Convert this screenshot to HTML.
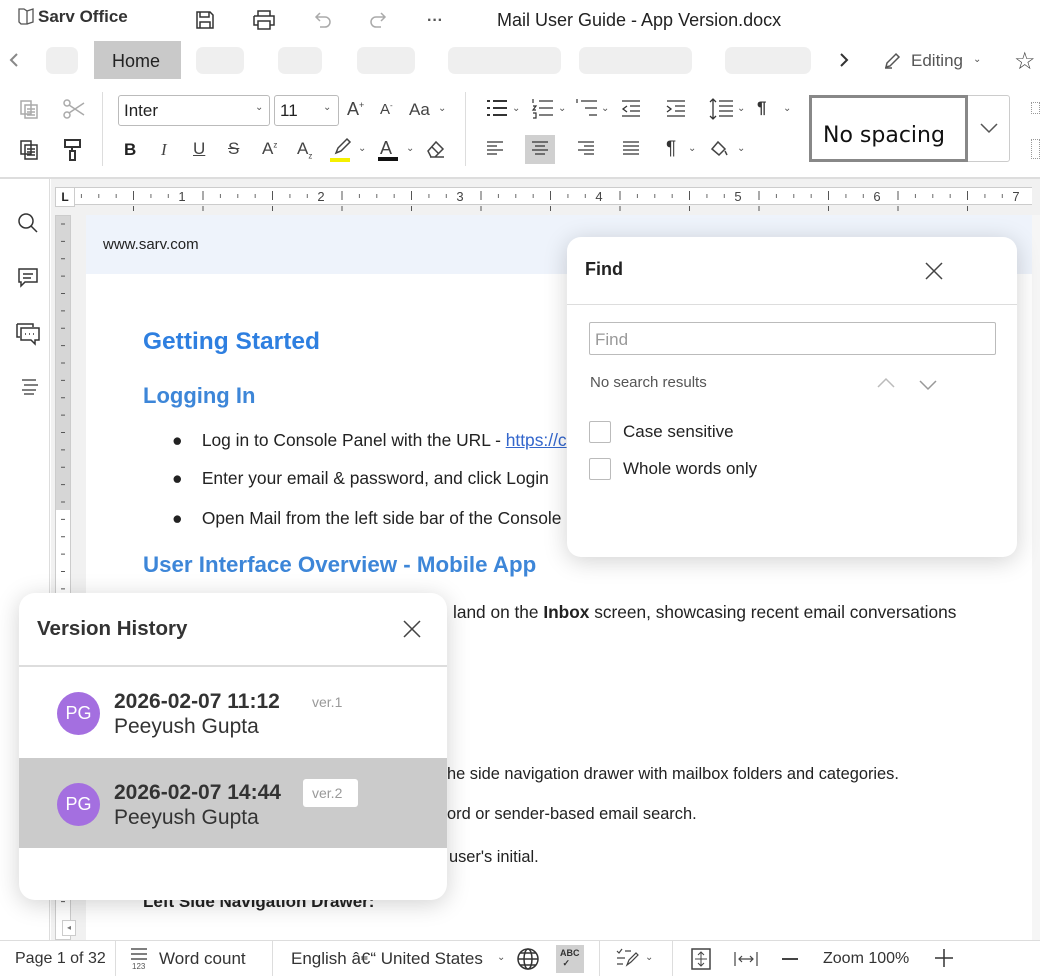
<!DOCTYPE html>
<html><head><meta charset="utf-8">
<style>
*{box-sizing:border-box;margin:0;padding:0}
body{width:1040px;height:976px;overflow:hidden;background:#fff;font-family:"Liberation Sans",sans-serif;color:#222;position:relative}
.a{position:absolute}
.ic{position:absolute;fill:none;stroke:#444;stroke-width:1.5}
.pill{position:absolute;top:47px;height:27px;background:#efefef;border-radius:7px}
.t{position:absolute;font-size:16px;color:#222;white-space:nowrap}
.dd{position:absolute;font-size:10px;color:#555}
</style></head><body>

<!-- Top bar -->
<svg class="ic" style="left:17px;top:7px" width="20" height="18" viewBox="0 0 20 18"><path d="M2 2h5l3 2v13H4l-2-2z M10 4l6-2v13l-6 2" stroke="#555" stroke-width="1.3"/></svg>
<div class="t" style="left:38px;top:7px;font-weight:bold;font-size:17px;color:#333">Sarv Office</div>
<svg class="ic" style="left:195px;top:10px" width="20" height="20" viewBox="0 0 20 20"><path d="M2 2h13l3 3v13H2z M5 2v5h9V2 M5 18v-6h10v6" stroke="#333"/></svg>
<svg class="ic" style="left:252px;top:10px" width="24" height="20" viewBox="0 0 24 20"><path d="M6 6V1h12v5 M2 6h20v9h-4 M6 15H2V6 M6 11h12v8H6z" stroke="#333"/></svg>
<svg class="ic" style="left:312px;top:10px" width="20" height="20" viewBox="0 0 20 20"><path d="M4 7h9a5 5 0 010 10H8 M8 3L4 7l4 4" stroke="#aaa"/></svg>
<svg class="ic" style="left:369px;top:10px" width="20" height="20" viewBox="0 0 20 20"><path d="M16 7H7a5 5 0 000 10h5 M12 3l4 4-4 4" stroke="#aaa"/></svg>
<div class="t" style="left:427px;top:12px;font-weight:bold;color:#555">···</div>
<div class="t" style="left:497px;top:10px;font-size:18px;color:#222">Mail User Guide - App Version.docx</div>

<!-- Tabs -->
<svg class="ic" style="left:8px;top:52px" width="12" height="16" viewBox="0 0 12 16"><path d="M9 2L3 8l6 6" stroke="#888" stroke-width="2"/></svg>
<div class="pill" style="left:46px;width:32px"></div>
<div class="a" style="left:94px;top:41px;width:87px;height:38px;background:#c9c9c9"></div>
<div class="t" style="left:112px;top:51px;font-size:18px">Home</div>
<div class="pill" style="left:196px;width:48px"></div>
<div class="pill" style="left:278px;width:44px"></div>
<div class="pill" style="left:357px;width:58px"></div>
<div class="pill" style="left:448px;width:113px"></div>
<div class="pill" style="left:579px;width:113px"></div>
<div class="pill" style="left:725px;width:86px"></div>
<svg class="ic" style="left:838px;top:52px" width="12" height="16" viewBox="0 0 12 16"><path d="M3 2l6 6-6 6" stroke="#333" stroke-width="2"/></svg>
<svg class="ic" style="left:883px;top:50px" width="20" height="20" viewBox="0 0 20 20"><path d="M3 17l1-4 9-9 3 3-9 9z M2 18h7" stroke="#555"/></svg>
<div class="t" style="left:911px;top:51px;font-size:17px;color:#555">Editing</div>
<div class="dd" style="left:973px;top:54px">⌄</div>
<div class="t" style="left:1014px;top:47px;font-size:24px;color:#444">☆</div>

<!-- Toolbar -->
<div class="a" style="left:0;top:177px;width:1040px;height:2px;background:#ddd"></div>
<div class="a" style="left:102px;top:92px;width:1px;height:74px;background:#ddd"></div>
<div class="a" style="left:465px;top:92px;width:1px;height:74px;background:#ddd"></div>
<svg class="ic" style="left:18px;top:98px" width="22" height="22" viewBox="0 0 22 22"><path d="M3 3h10v13H3z M7 7h12v13H7z M9 11h8 M9 14h8 M9 17h8" stroke="#aaa"/></svg>
<svg class="ic" style="left:62px;top:98px" width="24" height="22" viewBox="0 0 24 22"><circle cx="5" cy="5" r="3" stroke="#aaa"/><circle cx="5" cy="17" r="3" stroke="#aaa"/><path d="M7 7l15 10 M7 15L22 5" stroke="#aaa"/></svg>
<svg class="ic" style="left:18px;top:138px" width="22" height="24" viewBox="0 0 22 24"><path d="M3 3h10v13H3z M7 7h12v14H7z M9 11h8 M9 14h8 M9 17h8" stroke="#333"/></svg>
<svg class="ic" style="left:63px;top:138px" width="20" height="24" viewBox="0 0 20 24"><path d="M2 2h15v7H2z M9 9v4 M7 13h5v9H7z" stroke="#333" stroke-width="2"/></svg>
<div class="a" style="left:118px;top:95px;width:152px;height:31px;border:1px solid #bbb;border-radius:3px"></div>
<div class="t" style="left:124px;top:101px;font-size:17px">Inter</div>
<div class="dd" style="left:255px;top:102px">⌄</div>
<div class="a" style="left:274px;top:95px;width:65px;height:31px;border:1px solid #bbb;border-radius:3px"></div>
<div class="t" style="left:280px;top:101px;font-size:17px">11</div>
<div class="dd" style="left:323px;top:102px">⌄</div>
<div class="t" style="left:347px;top:99px;font-size:18px;color:#444">A<sup style="font-size:9px">+</sup></div>
<div class="t" style="left:380px;top:101px;font-size:15px;color:#444">A<sup style="font-size:8px">-</sup></div>
<div class="t" style="left:409px;top:100px;font-size:17px;color:#444">Aa</div><div class="dd" style="left:438px;top:103px">⌄</div>
<div class="t" style="left:124px;top:140px;font-weight:bold;font-size:17px">B</div>
<div class="t" style="left:161px;top:140px;font-style:italic;font-size:17px;font-family:'Liberation Serif',serif;color:#444">I</div>
<div class="t" style="left:193px;top:139px;text-decoration:underline;font-size:17px;color:#444">U</div>
<div class="t" style="left:228px;top:139px;text-decoration:line-through;font-size:17px;color:#444">S</div>
<div class="t" style="left:262px;top:139px;font-size:17px;color:#444">A<sup style="font-size:8px">z</sup></div>
<div class="t" style="left:297px;top:139px;font-size:17px;color:#444">A<sub style="font-size:8px">z</sub></div>
<svg class="ic" style="left:330px;top:137px" width="24" height="26" viewBox="0 0 24 26"><path d="M6 16l2-5 9-9 3 3-9 9z" stroke="#444"/><rect x="0" y="21" width="20" height="4" fill="#f5f000" stroke="none"/></svg>
<div class="dd" style="left:358px;top:143px">⌄</div>
<div class="t" style="left:380px;top:138px;font-size:18px;color:#444">A</div>
<div class="a" style="left:378px;top:157px;width:20px;height:4px;background:#111"></div>
<div class="dd" style="left:406px;top:143px">⌄</div>
<svg class="ic" style="left:425px;top:139px" width="22" height="20" viewBox="0 0 22 20"><path d="M3 12l8-9 7 7-8 8H6z M7 8l7 7 M5 18h14" stroke="#444"/></svg>

<svg class="ic" style="left:485px;top:98px" width="26" height="22" viewBox="0 0 26 22"><path d="M2 3h3 M8 3h14 M2 10h3 M8 10h14 M2 17h3 M8 17h14" stroke="#333" stroke-width="2"/></svg><div class="dd" style="left:512px;top:103px">⌄</div>
<svg class="ic" style="left:531px;top:98px" width="26" height="22" viewBox="0 0 26 22"><path d="M8 3h14 M8 10h14 M8 17h14 M2 1v4 M2 8h3l-3 4h3 M2 15h3v5H2" stroke="#333" stroke-width="1.2"/></svg><div class="dd" style="left:558px;top:103px">⌄</div>
<svg class="ic" style="left:575px;top:98px" width="26" height="22" viewBox="0 0 26 22"><path d="M6 3h16 M10 10h12 M14 17h8 M2 1v4" stroke="#333" stroke-width="1.2"/></svg><div class="dd" style="left:601px;top:103px">⌄</div>
<svg class="ic" style="left:620px;top:98px" width="22" height="22" viewBox="0 0 22 22"><path d="M2 3h18 M10 8h10 M10 13h10 M2 18h18 M7 8l-4 3 4 3" stroke="#333" stroke-width="1.3"/></svg>
<svg class="ic" style="left:665px;top:98px" width="22" height="22" viewBox="0 0 22 22"><path d="M2 3h18 M10 8h10 M10 13h10 M2 18h18 M2 8l4 3-4 3" stroke="#333" stroke-width="1.3"/></svg>
<svg class="ic" style="left:709px;top:98px" width="26" height="22" viewBox="0 0 26 22"><path d="M10 3h14 M10 8h14 M10 13h14 M10 18h14 M4 1v20 M1 4l3-3 3 3 M1 18l3 3 3-3" stroke="#333" stroke-width="1.3"/></svg><div class="dd" style="left:737px;top:103px">⌄</div>
<div class="t" style="left:757px;top:98px;font-size:17px;font-weight:bold;color:#333">¶</div><div class="dd" style="left:783px;top:103px">⌄</div>
<svg class="ic" style="left:485px;top:139px" width="20" height="20" viewBox="0 0 20 20"><path d="M2 3h16 M2 7h10 M2 11h16 M2 15h10" stroke="#333" stroke-width="1.3"/></svg>
<div class="a" style="left:525px;top:135px;width:30px;height:29px;background:#d0d0d0"></div>
<svg class="ic" style="left:530px;top:139px" width="20" height="20" viewBox="0 0 20 20"><path d="M2 3h16 M5 7h10 M2 11h16 M5 15h10" stroke="#333" stroke-width="1.3"/></svg>
<svg class="ic" style="left:576px;top:139px" width="20" height="20" viewBox="0 0 20 20"><path d="M2 3h16 M8 7h10 M2 11h16 M8 15h10" stroke="#333" stroke-width="1.3"/></svg>
<svg class="ic" style="left:621px;top:139px" width="20" height="20" viewBox="0 0 20 20"><path d="M2 3h16 M2 7h16 M2 11h16 M2 15h16" stroke="#333" stroke-width="1.3"/></svg>
<div class="t" style="left:666px;top:138px;font-size:19px;color:#333">¶</div><div class="dd" style="left:688px;top:143px">⌄</div>
<svg class="ic" style="left:709px;top:139px" width="22" height="20" viewBox="0 0 22 20"><path d="M3 10l6-7 7 7-6 6z M16 12l2 4" stroke="#444"/></svg><div class="dd" style="left:737px;top:143px">⌄</div>

<div class="a" style="left:809px;top:95px;width:201px;height:67px;border:1px solid #ccc;border-radius:3px"></div>
<div class="a" style="left:809px;top:95px;width:159px;height:67px;border:3px solid #888"></div>
<div class="t" style="left:823px;top:123px;font-size:22px;font-family:'DejaVu Sans',sans-serif;color:#111">No spacing</div>
<svg class="ic" style="left:979px;top:122px" width="20" height="12" viewBox="0 0 20 12"><path d="M2 2l8 8 8-8" stroke="#555"/></svg>
<div class="a" style="left:1031px;top:102px;width:9px;height:12px;border:1px dotted #999"></div>
<div class="a" style="left:1031px;top:139px;width:9px;height:20px;border:1px dotted #999"></div>

<!-- left sidebar -->
<div class="a" style="left:0;top:179px;width:50px;height:761px;background:#fff;border-right:1px solid #ddd"></div>
<svg class="ic" style="left:16px;top:211px" width="24" height="24" viewBox="0 0 24 24"><circle cx="10" cy="10" r="7" stroke="#333"/><path d="M15 15l6 6" stroke="#333"/></svg>
<svg class="ic" style="left:17px;top:267px" width="22" height="22" viewBox="0 0 22 22"><path d="M2 2h18v13H8l-4 4v-4H2z M6 7h10 M6 11h8" stroke="#333"/></svg>
<svg class="ic" style="left:15px;top:322px" width="26" height="24" viewBox="0 0 26 24"><path d="M2 2h16v3 M2 2v13h3 M6 6h18v12h-4v4l-4-4H6z M10 12h1 M14 12h1 M18 12h1" stroke="#333"/></svg>
<svg class="ic" style="left:18px;top:377px" width="22" height="20" viewBox="0 0 22 20"><path d="M4 3h14 M6 8h14 M4 13h14 M6 17h10" stroke="#333" stroke-width="1.3"/></svg>

<!-- document area -->
<div class="a" style="left:51px;top:179px;width:989px;height:761px;background:#f1f1f1"></div>
<div class="a" style="left:75px;top:187px;width:957px;height:18px;background:#fff;border-top:1px solid #ccc;border-bottom:1px solid #ccc"></div>
<div class="a" style="left:55px;top:187px;width:20px;height:20px;background:#fff;border:1px solid #ccc;font-weight:bold;font-size:12px;text-align:center;line-height:18px">L</div>
<svg class="a" style="left:75px;top:187px" width="957" height="30">
<defs><pattern id="tk" x="-10.5" y="0" width="17.375" height="30" patternUnits="userSpaceOnUse"><line x1="17" y1="7" x2="17" y2="11" stroke="#555" stroke-width="1"/></pattern>
<pattern id="tk2" x="-10.5" y="0" width="69.5" height="30" patternUnits="userSpaceOnUse"><line x1="69" y1="4" x2="69" y2="13" stroke="#555" stroke-width="1"/><line x1="69" y1="19" x2="69" y2="24" stroke="#555"/></pattern></defs>
<rect x="0" y="0" width="957" height="18" fill="url(#tk)"/>
<rect x="0" y="0" width="957" height="30" fill="url(#tk2)"/>
<g font-size="13" fill="#444" text-anchor="middle" font-family="Liberation Sans">
<rect x="100" y="2" width="14" height="14" fill="#fff"/><text x="107" y="14">1</text>
<rect x="239" y="2" width="14" height="14" fill="#fff"/><text x="246" y="14">2</text>
<rect x="378" y="2" width="14" height="14" fill="#fff"/><text x="385" y="14">3</text>
<rect x="517" y="2" width="14" height="14" fill="#fff"/><text x="524" y="14">4</text>
<rect x="656" y="2" width="14" height="14" fill="#fff"/><text x="663" y="14">5</text>
<rect x="795" y="2" width="14" height="14" fill="#fff"/><text x="802" y="14">6</text>
<rect x="934" y="2" width="14" height="14" fill="#fff"/><text x="941" y="14">7</text></g>
</svg>
<div class="a" style="left:55px;top:215px;width:16px;height:725px;background:#fff;border:1px solid #ccc"></div>
<div class="a" style="left:56px;top:216px;width:14px;height:285px;background:#d6d6d6"></div>
<div class="a" style="left:56px;top:495px;width:14px;height:15px;background:#d6d6d6"></div>
<svg class="a" style="left:56px;top:216px" width="14" height="720"><defs><pattern id="vt" x="0" y="7" width="14" height="17.375" patternUnits="userSpaceOnUse"><line x1="5" y1="1" x2="9" y2="1" stroke="#555"/></pattern></defs><rect width="14" height="700" fill="url(#vt)"/></svg>
<div class="a" style="left:62px;top:920px;width:14px;height:16px;background:#fff;border:1px solid #ccc;font-size:8px;color:#777;text-align:center;line-height:14px">◂</div>

<div class="a" style="left:86px;top:215px;width:946px;height:725px;background:#fff"></div>
<div class="a" style="left:86px;top:215px;width:946px;height:59px;background:#eef3fb"></div>
<div class="a" style="left:1032px;top:215px;width:8px;height:725px;background:#f6f6f6"></div>
<div class="t" style="left:103px;top:236px;font-size:15px">www.sarv.com</div>
<div class="t" style="left:143px;top:328px;font-size:24.5px;font-weight:bold;color:#2e7fe0">Getting Started</div>
<div class="t" style="left:143px;top:383px;font-size:22px;font-weight:bold;color:#3d86d8">Logging In</div>
<div class="t" style="left:172px;top:430px;font-size:17.4px">●&nbsp;&nbsp;&nbsp;&nbsp;Log in to Console Panel with the URL - <span style="color:#3366cc;text-decoration:underline">https://c</span></div>
<div class="t" style="left:172px;top:468px;font-size:17.4px">●&nbsp;&nbsp;&nbsp;&nbsp;Enter your email &amp; password, and click Login</div>
<div class="t" style="left:172px;top:508px;font-size:17.4px">●&nbsp;&nbsp;&nbsp;&nbsp;Open Mail from the left side bar of the Console</div>
<div class="t" style="left:143px;top:552px;font-size:22.3px;font-weight:bold;color:#3d86d8">User Interface Overview - Mobile App</div>
<div class="t" style="left:453px;top:602px;font-size:17.3px">land on the <b>Inbox</b> screen, showcasing recent email conversations</div>
<div class="t" style="left:447px;top:765px;font-size:16.4px">he side navigation drawer with mailbox folders and categories.</div>
<div class="t" style="left:447px;top:805px;font-size:16.4px">ord or sender-based email search.</div>
<div class="t" style="left:449px;top:848px;font-size:16.4px">user's initial.</div>
<div class="t" style="left:143px;top:892px;font-size:17px;font-weight:bold">Left Side Navigation Drawer:</div>

<!-- Find panel -->
<div class="a" style="left:567px;top:237px;width:450px;height:320px;background:#fff;border-radius:14px;box-shadow:0 4px 24px rgba(0,0,0,.18)"></div>
<div class="t" style="left:585px;top:259px;font-size:18px;font-weight:bold">Find</div>
<svg class="ic" style="left:924px;top:261px" width="20" height="20" viewBox="0 0 20 20"><path d="M2 2l16 16 M18 2L2 18" stroke="#444"/></svg>
<div class="a" style="left:567px;top:304px;width:450px;height:1px;background:#ddd"></div>
<div class="a" style="left:589px;top:322px;width:407px;height:33px;border:1px solid #bbb;border-radius:2px"></div>
<div class="t" style="left:595px;top:330px;font-size:17px;color:#999">Find</div>
<div class="t" style="left:590px;top:374px;font-size:15px;color:#555">No search results</div>
<svg class="ic" style="left:876px;top:377px" width="20" height="12" viewBox="0 0 20 12"><path d="M2 10l8-8 8 8" stroke="#bbb"/></svg>
<svg class="ic" style="left:918px;top:379px" width="20" height="12" viewBox="0 0 20 12"><path d="M2 2l8 8 8-8" stroke="#999"/></svg>
<div class="a" style="left:589px;top:421px;width:22px;height:22px;border:1px solid #bbb;border-radius:2px"></div>
<div class="t" style="left:623px;top:422px;font-size:17px">Case sensitive</div>
<div class="a" style="left:589px;top:458px;width:22px;height:22px;border:1px solid #bbb;border-radius:2px"></div>
<div class="t" style="left:623px;top:459px;font-size:17px">Whole words only</div>

<!-- Version history -->
<div class="a" style="left:19px;top:593px;width:428px;height:307px;background:#fff;border-radius:16px;box-shadow:0 4px 24px rgba(0,0,0,.18);overflow:hidden">
 <div class="a" style="left:0;top:72px;width:428px;height:2px;background:#ddd"></div>
 <div class="a" style="left:0;top:165px;width:428px;height:90px;background:#cbcbcb"></div>
</div>
<div class="t" style="left:37px;top:617px;font-size:20.5px;font-weight:bold;color:#333">Version History</div>
<svg class="ic" style="left:402px;top:619px" width="20" height="20" viewBox="0 0 20 20"><path d="M2 2l16 16 M18 2L2 18" stroke="#444"/></svg>
<div class="a" style="left:57px;top:692px;width:43px;height:43px;border-radius:50%;background:#a46fe0;color:#fff;font-size:18px;text-align:center;line-height:43px">PG</div>
<div class="t" style="left:114px;top:690px;font-size:21px;font-weight:bold;color:#333">2026-02-07 11:12</div>
<div class="t" style="left:312px;top:694px;font-size:14px;color:#999">ver.1</div>
<div class="t" style="left:114px;top:715px;font-size:21px;color:#333">Peeyush Gupta</div>
<div class="a" style="left:57px;top:783px;width:43px;height:43px;border-radius:50%;background:#a46fe0;color:#fff;font-size:18px;text-align:center;line-height:43px">PG</div>
<div class="t" style="left:114px;top:781px;font-size:21px;font-weight:bold;color:#333">2026-02-07 14:44</div>
<div class="a" style="left:303px;top:779px;width:55px;height:28px;background:#fff;border-radius:3px"></div>
<div class="t" style="left:312px;top:785px;font-size:14px;color:#999">ver.2</div>
<div class="t" style="left:114px;top:806px;font-size:21px;color:#333">Peeyush Gupta</div>

<!-- status bar -->
<div class="a" style="left:0;top:940px;width:1040px;height:36px;background:#fff;border-top:1px solid #ddd"></div>
<div class="t" style="left:15px;top:950px;font-size:16px;color:#333">Page 1 of 32</div>
<div class="a" style="left:115px;top:941px;width:1px;height:35px;background:#ddd"></div>
<svg class="ic" style="left:129px;top:946px" width="20" height="24" viewBox="0 0 20 24"><path d="M2 3h16 M2 8h16 M2 13h16" stroke="#555"/><text x="3" y="23" font-size="8" fill="#555" stroke="none" font-family="Liberation Sans">123</text></svg>
<div class="t" style="left:159px;top:949px;font-size:17px;color:#333">Word count</div>
<div class="a" style="left:272px;top:941px;width:1px;height:35px;background:#ddd"></div>
<div class="t" style="left:291px;top:949px;font-size:17px;color:#333">English â€“ United States</div>
<div class="dd" style="left:497px;top:952px">⌄</div>
<svg class="ic" style="left:516px;top:947px" width="24" height="24" viewBox="0 0 24 24"><circle cx="12" cy="12" r="10" stroke="#333"/><ellipse cx="12" cy="12" rx="4" ry="10" stroke="#333"/><path d="M2 12h20 M4 6h16 M4 18h16" stroke="#333"/></svg>
<div class="a" style="left:556px;top:945px;width:28px;height:28px;background:#d0d0d0"></div>
<div class="t" style="left:560px;top:948px;font-size:9px;font-weight:bold;color:#333">ABC<br>&nbsp;✓</div>
<div class="a" style="left:599px;top:941px;width:1px;height:35px;background:#ddd"></div>
<svg class="ic" style="left:615px;top:947px" width="26" height="22" viewBox="0 0 26 22"><path d="M2 4l2 2 3-4 M10 4h6 M2 11h8 M2 17h6 M12 18l2-5 7-7 2 2-7 7z" stroke="#444" stroke-width="1.2"/></svg>
<div class="dd" style="left:645px;top:952px">⌄</div>
<div class="a" style="left:672px;top:941px;width:1px;height:35px;background:#ddd"></div>
<svg class="ic" style="left:690px;top:947px" width="22" height="24" viewBox="0 0 22 24"><rect x="2" y="2" width="18" height="20" stroke="#444"/><path d="M11 5v14 M8 8l3-3 3 3 M8 16l3 3 3-3 M5 12h12" stroke="#444" stroke-width="1"/></svg>
<svg class="ic" style="left:733px;top:950px" width="26" height="18" viewBox="0 0 26 18"><path d="M2 2v14 M24 2v14 M6 9h14 M9 6l-3 3 3 3 M17 6l3 3-3 3" stroke="#444" stroke-width="1.2"/></svg>
<div class="a" style="left:782px;top:958px;width:16px;height:1.5px;background:#444"></div>
<div class="t" style="left:823px;top:950px;font-size:16px;color:#333">Zoom 100%</div>
<svg class="ic" style="left:934px;top:948px" width="20" height="20" viewBox="0 0 20 20"><path d="M10 1v18 M1 10h18" stroke="#333"/></svg>
</body></html>
